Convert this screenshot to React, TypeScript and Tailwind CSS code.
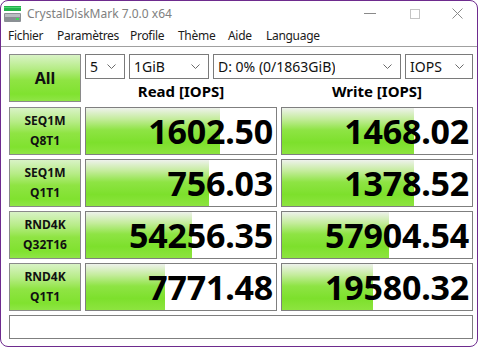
import React from 'react';

interface ResultRow {
  line1: string;
  line2: string;
  read: string;
  write: string;
  readBar: number;
  writeBar: number;
}

const rows: ResultRow[] = [
  { line1: 'SEQ1M', line2: 'Q8T1', read: '1602.50', write: '1468.02', readBar: 134, writeBar: 132 },
  { line1: 'SEQ1M', line2: 'Q1T1', read: '756.03', write: '1378.52', readBar: 123, writeBar: 132 },
  { line1: 'RND4K', line2: 'Q32T16', read: '54256.35', write: '57904.54', readBar: 106, writeBar: 107 },
  { line1: 'RND4K', line2: 'Q1T1', read: '7771.48', write: '19580.32', readBar: 79, writeBar: 91 },
];

// menu labels with the width each one takes in the bar
const menus = [
  { label: 'Fichier', w: 'w-[49px]' },
  { label: 'Paramètres', w: 'w-[73px]' },
  { label: 'Profile', w: 'w-[48px]' },
  { label: 'Thème', w: 'w-[50px]' },
  { label: 'Aide', w: 'w-[38px]' },
  { label: 'Language', w: 'w-[70px]' },
];

const Chevron = () => (
  <svg width="9" height="6" viewBox="0 0 9 6" className="shrink-0">
    <polyline points="0.5,0.5 4.5,4.5 8.5,0.5" fill="none" stroke="#6b6b6b" strokeWidth="1" />
  </svg>
);

const Combo = ({ value, width }: { value: string; width: string }) => (
  <div className={`${width} h-[25px] border border-[#7a7a7a] bg-white flex items-center justify-between pl-[4px] pr-[8px] text-[14px] text-[#111]`}>
    <span className="truncate">{value}</span>
    <Chevron />
  </div>
);

// value cell with the green bar drawn from the left
const ValueCell = ({ value, bar }: { value: string; bar: number }) => (
  <div className="relative h-[48px] border border-[#7f7f7f] bg-white flex items-center justify-end pr-[3px] overflow-hidden">
    <div
      className="absolute left-0 top-0 bottom-0 bg-[linear-gradient(to_bottom,#eef2ec_0%,#c4ec9c_24%,#8ee444_48%,#7de02c_75%,#8de43f_100%)]"
      style={{ width: bar }}
    />
    <span className="relative font-bold text-[34px] leading-none text-black tracking-[-0.2px]">{value}</span>
  </div>
);

const LabelButton = ({ children, className = '' }: { children: React.ReactNode; className?: string }) => (
  <div className={`border border-[#8a8a8a] bg-[linear-gradient(to_bottom,#d9f3c6_0%,#b6ec86_30%,#8fe443_55%,#80e22f_85%,#8fe546_100%)] flex flex-col items-center justify-center text-[#111] font-bold ${className}`}>
    {children}
  </div>
);

const AppIcon = () => (
  <svg width="17" height="16" viewBox="0 0 17 16">
    <rect x="0" y="0" width="17" height="5" fill="#22b24c" />
    <rect x="0" y="1" width="17" height="1" fill="#4fd873" />
    <rect x="0" y="7" width="17" height="9" rx="1" fill="#8a8f94" />
    <rect x="1" y="8" width="15" height="3" fill="#b9bdc1" />
    <rect x="12" y="12" width="3" height="2" fill="#3ddc5a" />
  </svg>
);

export default function App() {
  return (
    <div className="w-[482px] h-[347px] bg-white font-['Noto_Sans',sans-serif]">
      <div className="w-[478px] h-[347px] border border-[#6e2b8e] rounded-[8px] bg-white flex flex-col overflow-hidden">
        {/* title bar */}
        <div className="h-[25px] flex items-center shrink-0">
          <div className="ml-[3px] mt-[1px]">
            <AppIcon />
          </div>
          <span className="ml-[6px] text-[12px] text-[#808080]">CrystalDiskMark 7.0.0 x64</span>
          <div className="ml-auto flex items-center h-full">
            <div className="w-[45px] flex justify-center">
              <div className="w-[12px] h-px bg-[#8a8a8a]" />
            </div>
            <div className="w-[45px] flex justify-center">
              <div className="w-[10px] h-[10px] border border-[#c4c4c4]" />
            </div>
            <div className="w-[40px] flex justify-center">
              <svg width="11" height="11" viewBox="0 0 11 11">
                <path d="M0.5 0.5 L10.5 10.5 M10.5 0.5 L0.5 10.5" stroke="#8a8a8a" strokeWidth="1" />
              </svg>
            </div>
          </div>
        </div>

        {/* menu */}
        <div className="h-[20px] flex items-center pl-[7px] text-[12px] text-[#1b1b1b] shrink-0">
          {menus.map(m => (
            <span key={m.label} className={`${m.w} tracking-[-0.3px]`}>{m.label}</span>
          ))}
        </div>
        <div className="h-px bg-[#a0a0a0] shrink-0" />

        {/* main */}
        <div className="pl-[8px] pt-[7px] grid grid-cols-[72px_192px_192px] gap-[4px]">
          <LabelButton className="h-[48px] text-[16px]">All</LabelButton>
          <div className="col-span-2 flex flex-col">
            <div className="flex gap-[4px]">
              <Combo value="5" width="w-[40px]" />
              <Combo value="1GiB" width="w-[80px]" />
              <Combo value="D: 0% (0/1863GiB)" width="w-[188px]" />
              <Combo value="IOPS" width="w-[68px]" />
            </div>
            <div className="flex flex-1 items-center">
              <div className="w-[192px] text-center font-bold text-[15px] text-black pt-[1px]">Read [IOPS]</div>
              <div className="w-[4px]" />
              <div className="w-[192px] text-center font-bold text-[15px] text-black pt-[1px]">Write [IOPS]</div>
            </div>
          </div>

          {rows.map((r, i) => (
            <React.Fragment key={i}>
              <LabelButton className="h-[48px] text-[12px] leading-[20px]">
                <span>{r.line1}</span>
                <span>{r.line2}</span>
              </LabelButton>
              <ValueCell value={r.read} bar={r.readBar} />
              <ValueCell value={r.write} bar={r.writeBar} />
            </React.Fragment>
          ))}

          <div className="col-span-3 h-[24px] border border-[#7f7f7f] bg-white" />
        </div>
      </div>
    </div>
  );
}
